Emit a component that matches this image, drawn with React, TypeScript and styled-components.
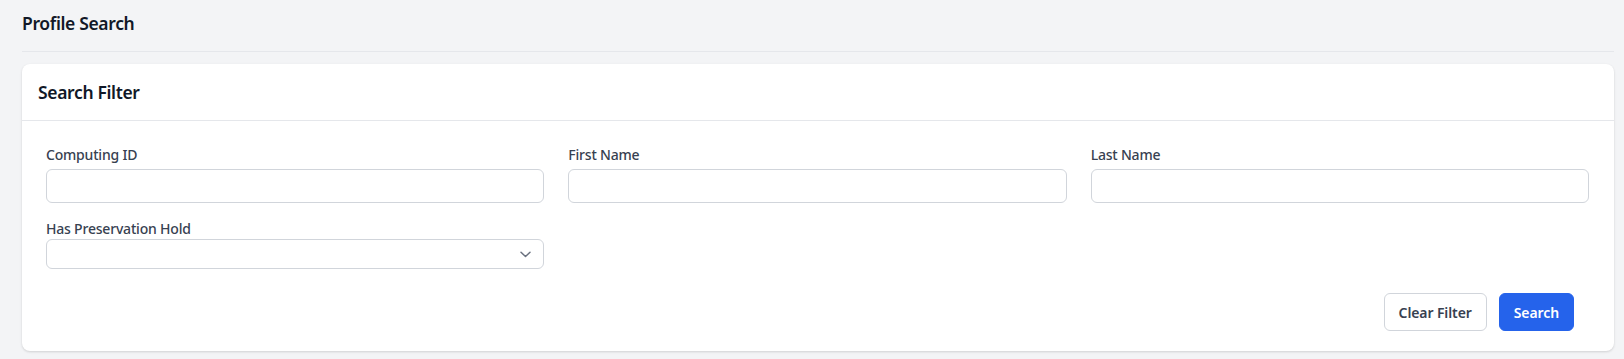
import React from "react";
import styled, { createGlobalStyle } from "styled-components";

const textColor = "#111827";
const labelColor = "#374151";
const lineColor = "#e5e7eb";
const fieldBorder = "#d1d5db";
const primary = "#2563eb";

const GlobalStyle = createGlobalStyle`
  * { box-sizing: border-box; }
  html, body {
    margin: 0;
    background: #f3f4f6;
    font-family: "Noto Sans", "Open Sans", Arial, sans-serif;
    color: ${textColor};
  }
`;

const Page = styled.div`
  padding: 9px 10px 8px 22px;
`;

const PageHeader = styled.div`
  padding-bottom: 14px;
  border-bottom: 1px solid ${lineColor};
  margin-bottom: 12px;
`;

const PageTitle = styled.h1`
  margin: 0;
  font-size: 17.5px;
  line-height: 28px;
  font-weight: 600;
  letter-spacing: -0.35px;
`;

const Card = styled.section`
  background: #ffffff;
  border-radius: 8px;
  box-shadow: 0 1px 3px rgba(0, 0, 0, 0.1), 0 1px 2px rgba(0, 0, 0, 0.05);
`;

const CardHeader = styled.div`
  padding: 14px 16px;
  border-bottom: 1px solid ${lineColor};
`;

const CardTitle = styled.h2`
  margin: 0;
  font-size: 17.5px;
  line-height: 28px;
  font-weight: 600;
  letter-spacing: -0.35px;
`;

const CardBody = styled.div`
  padding: 24px 25px 20px 24px;
`;

const FieldGrid = styled.div`
  display: grid;
  grid-template-columns: repeat(3, 1fr);
  column-gap: 24px;
  row-gap: 16px;
`;

const Field = styled.label<{ $tight?: boolean }>`
  display: flex;
  flex-direction: column;
  gap: ${(p) => (p.$tight ? "0" : "4px")};
`;

const Label = styled.span`
  font-size: 14px;
  line-height: 20px;
  font-weight: 500;
  color: ${labelColor};
  letter-spacing: -0.2px;
`;

const TextInput = styled.input`
  width: 100%;
  height: 34px;
  border: 1px solid ${fieldBorder};
  border-radius: 6px;
  padding: 0 12px;
  font: inherit;
  font-size: 14px;
  background: #fff;
  outline: none;
`;

const SelectBox = styled.div`
  height: 30px;
  border: 1px solid ${fieldBorder};
  border-radius: 6px;
  background: #fff;
  display: flex;
  align-items: center;
  justify-content: flex-end;
  padding: 0 12px;
`;

const Actions = styled.div`
  display: flex;
  justify-content: flex-end;
  gap: 12px;
  margin-top: 24px;
  padding-right: 15px;
`;

const Button = styled.button<{ $primary?: boolean }>`
  height: 38px;
  padding: 0 14px;
  border-radius: 6px;
  font-family: inherit;
  font-size: 14px;
  font-weight: 600;
  letter-spacing: -0.1px;
  cursor: pointer;
  border: 1px solid ${(p) => (p.$primary ? primary : fieldBorder)};
  background: ${(p) => (p.$primary ? primary : "#fff")};
  color: ${(p) => (p.$primary ? "#fff" : labelColor)};
`;

const Chevron = () => (
  <svg width="11" height="7" viewBox="0 0 11 7" fill="none">
    <path d="M1 1.2 L5.5 5.5 L10 1.2" stroke="#6b7280" strokeWidth="1.5" strokeLinecap="round" strokeLinejoin="round" />
  </svg>
);

const textFields = ["Computing ID", "First Name", "Last Name"];

export default function App() {
  return (
    <>
      <GlobalStyle />
      <Page>
        <PageHeader>
          <PageTitle>Profile Search</PageTitle>
        </PageHeader>
        <Card>
          <CardHeader>
            <CardTitle>Search Filter</CardTitle>
          </CardHeader>
          <CardBody>
            <FieldGrid>
              {textFields.map((name) => (
                <Field key={name}>
                  <Label>{name}</Label>
                  <TextInput type="text" />
                </Field>
              ))}
              <Field $tight>
                <Label>Has Preservation Hold</Label>
                <SelectBox>
                  <Chevron />
                </SelectBox>
              </Field>
            </FieldGrid>
            <Actions>
              <Button>Clear Filter</Button>
              <Button $primary>Search</Button>
            </Actions>
          </CardBody>
        </Card>
      </Page>
    </>
  );
}
